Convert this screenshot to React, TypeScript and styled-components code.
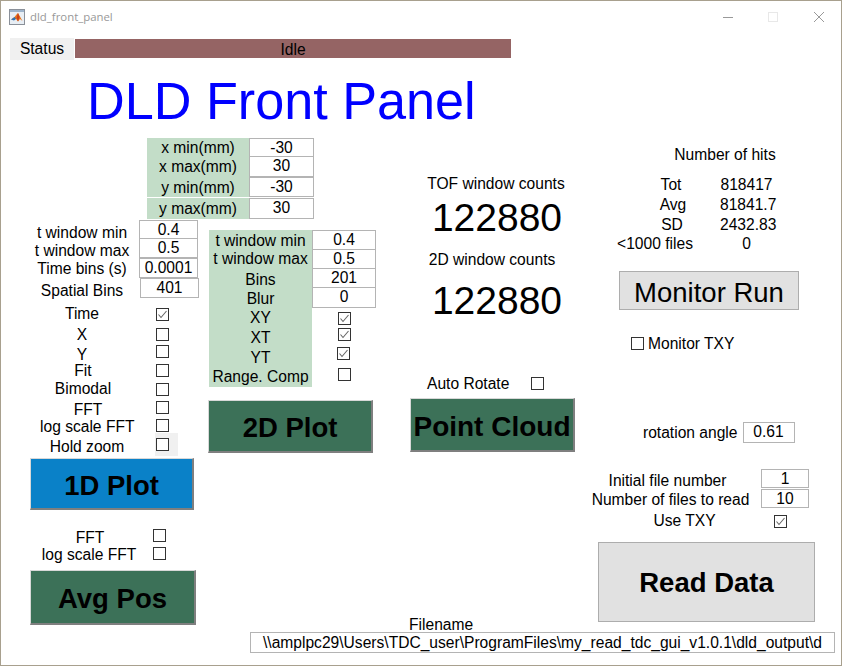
import React from "react";
import styled, { createGlobalStyle } from "styled-components";

const GlobalStyle = createGlobalStyle`
  html, body {
    margin: 0;
    padding: 0;
    background: #fff;
  }
  * {
    box-sizing: border-box;
  }
`;

// small shift of a centred text inside its box, done with padding so it stays in flow
const nudge = (dx = 0, dy = 0) => `
  padding: ${Math.max(dy * 2, 0)}px ${Math.max(-dx * 2, 0)}px ${Math.max(-dy * 2, 0)}px ${Math.max(dx * 2, 0)}px;
`;

const Window = styled.div`
  width: 842px;
  height: 666px;
  border: 1px solid #a8a08e;
  background: #fff;
  overflow: hidden;
  font-family: "Liberation Sans", Arial, sans-serif;
  font-size: 15.6px;
  color: #000;
`;

const TitleBar = styled.div`
  height: 31px;
  display: flex;
  align-items: center;
  padding-left: 8px;
`;

const TitleText = styled.span`
  margin-left: 5px;
  font-family: "Open Sans", "Noto Sans", sans-serif;
  font-size: 11.4px;
  color: #999;
`;

const WindowControls = styled.div`
  margin-left: auto;
  display: flex;
  align-items: center;
  padding-right: 17px;
  gap: 35px;

  svg:last-child {
    margin-left: 1px;
  }
`;

const StatusRow = styled.div`
  margin-top: 6px;
  height: 22px;
  padding-left: 9px;
  display: flex;
`;

const StatusLabel = styled.div`
  width: 64px;
  background: #f0f0f0;
  text-align: center;
  line-height: 22px;
`;

const StatusBar = styled.div`
  margin: 1px 0 0 1px;
  width: 436px;
  height: 19px;
  background: #956464;
  text-align: center;
  line-height: 22px;
`;

const PanelTitle = styled.h1`
  margin: 0;
  height: 78px;
  padding: 4px 0 0 86px;
  font-size: 52.2px;
  font-weight: 400;
  line-height: 74px;
  color: #0000ff;
`;

const Main = styled.div`
  height: 494px;
  padding-left: 29px;
  display: flex;
`;

const LeftSection = styled.section`
  width: 380px;
`;

const RangeTable = styled.div`
  margin: 0 0 1px 117px;
`;

const Row = styled.div<{ $h: number; $mt?: number; $ml?: number }>`
  display: flex;
  align-items: center;
  height: ${(p) => p.$h}px;
  margin-top: ${(p) => p.$mt ?? 0}px;
  margin-left: ${(p) => p.$ml ?? 0}px;
`;

const Label = styled.span<{ $w: number; $dx?: number; $dy?: number }>`
  flex: none;
  width: ${(p) => p.$w}px;
  text-align: center;
  white-space: nowrap;
  line-height: 18px;
  ${(p) => nudge(p.$dx, p.$dy)}
`;

const GreenCell = styled.span<{ $w: number; $dy?: number; $gap?: boolean }>`
  flex: none;
  align-self: stretch;
  width: ${(p) => p.$w}px;
  display: flex;
  align-items: center;
  justify-content: center;
  white-space: nowrap;
  line-height: 18px;
  background: #c3ddc8;
  ${(p) => nudge(0, p.$dy)}
  border-top: ${(p) => (p.$gap ? "1px solid #fff" : "0")};
`;

const Input = styled.div<{ $w: number; $h?: number; $joined?: boolean; $ml?: number }>`
  flex: none;
  width: ${(p) => p.$w}px;
  height: ${(p) => (p.$h ? `${p.$h}px` : "100%")};
  margin-left: ${(p) => p.$ml ?? 0}px;
  border: 1px solid #b4b4b4;
  border-top-width: ${(p) => (p.$joined ? 0 : 1)}px;
  background: #fff;
  text-align: center;
  line-height: 18px;
`;

const Columns = styled.div`
  display: flex;
`;

const ColumnA = styled.div`
  width: 179px;
`;

const ColumnB = styled.div`
  width: 167px;
  margin-top: 10px;
`;

const CheckBox = styled.span<{ $ml?: number; $up?: number; $down?: number }>`
  flex: none;
  width: 13px;
  height: 13px;
  margin-left: ${(p) => p.$ml ?? 0}px;
  margin-top: ${(p) => (p.$down ?? 0) * 2}px;
  margin-bottom: ${(p) => (p.$up ?? 0) * 2}px;
  border: 1px solid #333;
  background: #fff;
  display: block;
  line-height: 0;
`;

const HoldCell = styled.div`
  flex: none;
  align-self: flex-start;
  width: 23px;
  height: 23px;
  margin: 1px 0 0 21px;
  padding: 5px 0 0 1px;
  background: #f0f0f0;
`;

const PlotButton = styled.button<{ $bg: string; $w: number; $h: number; $mt: number; $ml?: number; $fs?: number }>`
  display: block;
  width: ${(p) => p.$w}px;
  height: ${(p) => p.$h}px;
  margin: ${(p) => p.$mt}px 0 0 ${(p) => p.$ml ?? 0}px;
  padding: 4px 0 0;
  background: ${(p) => p.$bg};
  border: 1px solid #d8d8d8;
  border-right: 2px solid #7f7f7f;
  border-bottom: 2px solid #7f7f7f;
  font-family: inherit;
  font-size: ${(p) => p.$fs ?? 27.5}px;
  font-weight: 700;
  color: #000;
`;

const GrayButton = styled.button<{ $w: number; $h: number; $mt: number; $ml: number; $bold?: boolean }>`
  display: block;
  width: ${(p) => p.$w}px;
  height: ${(p) => p.$h}px;
  margin: ${(p) => p.$mt}px 0 0 ${(p) => p.$ml}px;
  padding: ${(p) => (p.$bold ? 2 : 4)}px 0 0;
  background: #e1e1e1;
  border: 1px solid #adadad;
  font-family: inherit;
  font-size: 27.5px;
  font-weight: ${(p) => (p.$bold ? 700 : 400)};
  color: #000;
`;

const ColumnC = styled.section`
  width: 180px;
  padding-top: 37px;
`;

const CounterLabel = styled.div<{ $mt?: number; $w: number }>`
  width: ${(p) => p.$w}px;
  margin-top: ${(p) => p.$mt ?? 0}px;
  text-align: center;
  line-height: 18px;
`;

const BigCount = styled.div<{ $mt: number }>`
  width: 174px;
  margin-top: ${(p) => p.$mt}px;
  font-size: 39px;
  line-height: 44px;
  text-align: center;
`;

const FilenameLabel = styled.div`
  margin: 164px 0 0 -1px;
  line-height: 18px;
`;

const ColumnD = styled.section`
  width: 245px;
  padding-top: 8px;
`;

const HitsTitle = styled.div`
  width: 270px;
  text-align: center;
  line-height: 18px;
  white-space: nowrap;
`;

const StatsTable = styled.div`
  margin-top: 11px;
`;

const PlainLabel = styled.span<{ $ml?: number }>`
  flex: none;
  margin-left: ${(p) => p.$ml ?? 0}px;
  padding-top: 1px;
  white-space: nowrap;
  line-height: 18px;
`;

const PathField = styled.div`
  width: 585px;
  height: 21px;
  margin-left: 249px;
  border: 1px solid #b4b4b4;
  text-align: center;
  white-space: nowrap;
  overflow: hidden;
  line-height: 19px;
`;

const Check = ({ checked, ml, up, down }: { checked?: boolean; ml?: number; up?: number; down?: number }) => (
  <CheckBox $ml={ml} $up={up} $down={down}>
    {checked && (
      <svg width="11" height="11" viewBox="0 0 11 11">
        <path d="M1.5 5.5 L4 8.5 L9.5 2" fill="none" stroke="#666" strokeWidth="1.1" />
      </svg>
    )}
  </CheckBox>
);

const MatlabIcon = () => (
  <svg width="16" height="16" viewBox="0 0 16 16">
    <rect x="0.5" y="0.5" width="15" height="15" fill="#e8eef4" stroke="#8a9099" />
    <rect x="1" y="1" width="14" height="2" fill="#9db4cc" />
    <path d="M2 10.5 L5.5 8 L7.5 5.5 L9 4 L13.5 12 L11 10 L9 12.5 L7 10 Z" fill="#e8771c" />
    <path d="M2 10.5 L5.5 8 L7 10 L5 11.5 Z" fill="#2f73b5" />
    <path d="M9 4 L10.5 8 L9 12.5 L7.5 9 Z" fill="#c8401a" />
  </svg>
);

const rangeRows = [
  { label: "x min(mm)", value: "-30", h: 19 },
  { label: "x max(mm)", value: "30", h: 20, joined: true },
  { label: "y min(mm)", value: "-30", h: 20, dy: 1 },
  { label: "y max(mm)", value: "30", h: 22, gap: true },
];

const windowRowsA = [
  { label: "t window min", value: "0.4", h: 19, dy: 3 },
  { label: "t window max", value: "0.5", h: 19, joined: true, dy: 2 },
  { label: "Time bins (s)", value: "0.0001", h: 20, dy: 1 },
  { label: "Spatial Bins", value: "401", h: 20, ml: 1, dy: 3 },
];

const checkRowsA = [
  { label: "Time", h: 20, checked: true, dy: 0, mt: 6 },
  { label: "X", h: 20, dy: 1 },
  { label: "Y", h: 14, dy: 4 },
  { label: "Fit", h: 24, dy: 1, dx: 1 },
  { label: "Bimodal", h: 14, dy: 0, dx: 1 },
  { label: "FFT", h: 22, dy: 3, dx: 6 },
  { label: "log scale FFT", h: 14, dy: 2, dx: 5 },
];

const windowRowsB = [
  { label: "t window min", value: "0.4", h: 20, dy: 1 },
  { label: "t window max", value: "0.5", h: 19, dy: -1, joined: true },
  { label: "Bins", value: "201", h: 19, dy: 1, joined: true },
  { label: "Blur", value: "0", h: 20, dy: 1, joined: true },
];

const checkRowsB = [
  { label: "XY", h: 19, dy: 0, down: 1, checked: true },
  { label: "XT", h: 21, dy: 0, up: 3, checked: true },
  { label: "YT", h: 20, dy: 0, up: 5, checked: true, ml: 25 },
  { label: "Range. Comp", h: 19, dy: -1, up: 3 },
];

const hitRows = [
  { label: "Tot", value: "818417", dx: 16 },
  { label: "Avg", value: "81841.7", dx: 18 },
  { label: "SD", value: "2432.83", dx: 17 },
  { label: "<1000 files", value: "0", dx: 0, h: 18 },
];

export default function App() {
  return (
    <Window>
      <GlobalStyle />
      <TitleBar>
        <MatlabIcon />
        <TitleText>dld_front_panel</TitleText>
        <WindowControls>
          <svg width="10" height="10" viewBox="0 0 10 10">
            <path d="M0 5.5 H10" stroke="#999" strokeWidth="1" />
          </svg>
          <svg width="10" height="10" viewBox="0 0 10 10">
            <rect x="0.5" y="0.5" width="9" height="9" fill="none" stroke="#e8e8e8" />
          </svg>
          <svg width="10" height="10" viewBox="0 0 10 10">
            <path d="M0 0 L10 10 M10 0 L0 10" stroke="#999" strokeWidth="1" />
          </svg>
        </WindowControls>
      </TitleBar>

      <StatusRow>
        <StatusLabel>Status</StatusLabel>
        <StatusBar>Idle</StatusBar>
      </StatusRow>

      <PanelTitle>DLD Front Panel</PanelTitle>

      <Main>
        <LeftSection>
          <RangeTable>
            {rangeRows.map((r) => (
              <Row key={r.label} $h={r.h}>
                <GreenCell $w={102} $gap={r.gap} $dy={r.dy}>
                  {r.label}
                </GreenCell>
                <Input $w={65} $h={r.gap ? 21 : undefined} $joined={r.joined}>
                  {r.value}
                </Input>
              </Row>
            ))}
          </RangeTable>

          <Columns>
            <ColumnA>
              {windowRowsA.map((r) => (
                <Row key={r.label} $h={r.h}>
                  <Label $w={104} $dy={r.dy}>
                    {r.label}
                  </Label>
                  <Input $w={59} $ml={5 + (r.ml ?? 0)} $joined={r.joined}>
                    {r.value}
                  </Input>
                </Row>
              ))}
              {checkRowsA.map((r) => (
                <Row key={r.label} $h={r.h} $mt={r.mt}>
                  <Label $w={104} $dx={r.dx} $dy={r.dy}>
                    {r.label}
                  </Label>
                  <Check checked={r.checked} ml={22} />
                </Row>
              ))}
              <Row $h={24}>
                <Label $w={104} $dx={5} $dy={3}>
                  Hold zoom
                </Label>
                <HoldCell>
                  <Check />
                </HoldCell>
              </Row>
              <PlotButton $bg="#0a81c8" $w={164} $h={52} $mt={2}>
                1D Plot
              </PlotButton>
              <Row $h={13} $mt={19}>
                <Label $w={122} $dx={-1} $dy={2}>
                  FFT
                </Label>
                <Check ml={1} />
              </Row>
              <Row $h={13} $mt={5}>
                <Label $w={122} $dx={-2} $dy={1}>
                  log scale FFT
                </Label>
                <Check ml={1} />
              </Row>
              <PlotButton $bg="#3c7158" $w={166} $h={55} $mt={10}>
                Avg Pos
              </PlotButton>
            </ColumnA>

            <ColumnB>
              {windowRowsB.map((r) => (
                <Row key={r.label} $h={r.h}>
                  <GreenCell $w={103} $dy={r.dy}>
                    {r.label}
                  </GreenCell>
                  <Input $w={64} $joined={r.joined}>
                    {r.value}
                  </Input>
                </Row>
              ))}
              {checkRowsB.map((r) => (
                <Row key={r.label} $h={r.h}>
                  <GreenCell $w={103} $dy={r.dy}>
                    {r.label}
                  </GreenCell>
                  <Check checked={r.checked} ml={r.ml ?? 26} up={r.up} down={r.down} />
                </Row>
              ))}
              <PlotButton $bg="#3c7158" $w={165} $h={53} $mt={13} $ml={-1}>
                2D Plot
              </PlotButton>
            </ColumnB>
          </Columns>
        </LeftSection>

        <ColumnC>
          <CounterLabel $w={172}>TOF window counts</CounterLabel>
          <BigCount $mt={3}>122880</BigCount>
          <CounterLabel $w={164} $mt={11}>
            2D window counts
          </CounterLabel>
          <BigCount $mt={10}>122880</BigCount>
          <Row $h={18} $mt={51} $ml={17}>
            <PlainLabel>Auto Rotate</PlainLabel>
            <Check ml={22} />
          </Row>
          <PlotButton $bg="#3c7158" $w={165} $h={54} $mt={6} $fs={28}>
            Point Cloud
          </PlotButton>
          <FilenameLabel>Filename</FilenameLabel>
        </ColumnC>

        <ColumnD>
          <HitsTitle>Number of hits</HitsTitle>
          <StatsTable>
            {hitRows.map((r) => (
              <Row key={r.label} $h={r.h ?? 20}>
                <Label $w={130} $dx={r.dx}>
                  {r.label}
                </Label>
                <Label $w={53}>{r.value}</Label>
              </Row>
            ))}
          </StatsTable>
          <GrayButton $w={180} $h={39} $mt={18} $ml={29}>
            Monitor Run
          </GrayButton>
          <Row $h={13} $mt={27} $ml={41}>
            <Check />
            <PlainLabel $ml={4}>Monitor TXY</PlainLabel>
          </Row>
          <Row $h={21} $mt={72} $ml={53}>
            <PlainLabel>rotation angle</PlainLabel>
            <Input $w={52} $ml={5}>
              0.61
            </Input>
          </Row>
          <Row $h={19} $mt={26}>
            <Label $w={171} $dx={-8} $dy={2}>
              Initial file number
            </Label>
            <Input $w={48}>1</Input>
          </Row>
          <Row $h={19} $mt={1}>
            <Label $w={171} $dx={-5} $dy={1}>
              Number of files to read
            </Label>
            <Input $w={48}>10</Input>
          </Row>
          <Row $h={18} $mt={4}>
            <Label $w={171} $dx={9}>
              Use TXY
            </Label>
            <Check checked ml={13} />
          </Row>
          <GrayButton $w={217} $h={80} $mt={12} $ml={8} $bold>
            Read Data
          </GrayButton>
        </ColumnD>
      </Main>

      <PathField>\\amplpc29\Users\TDC_user\ProgramFiles\my_read_tdc_gui_v1.0.1\dld_output\d</PathField>
    </Window>
  );
}
